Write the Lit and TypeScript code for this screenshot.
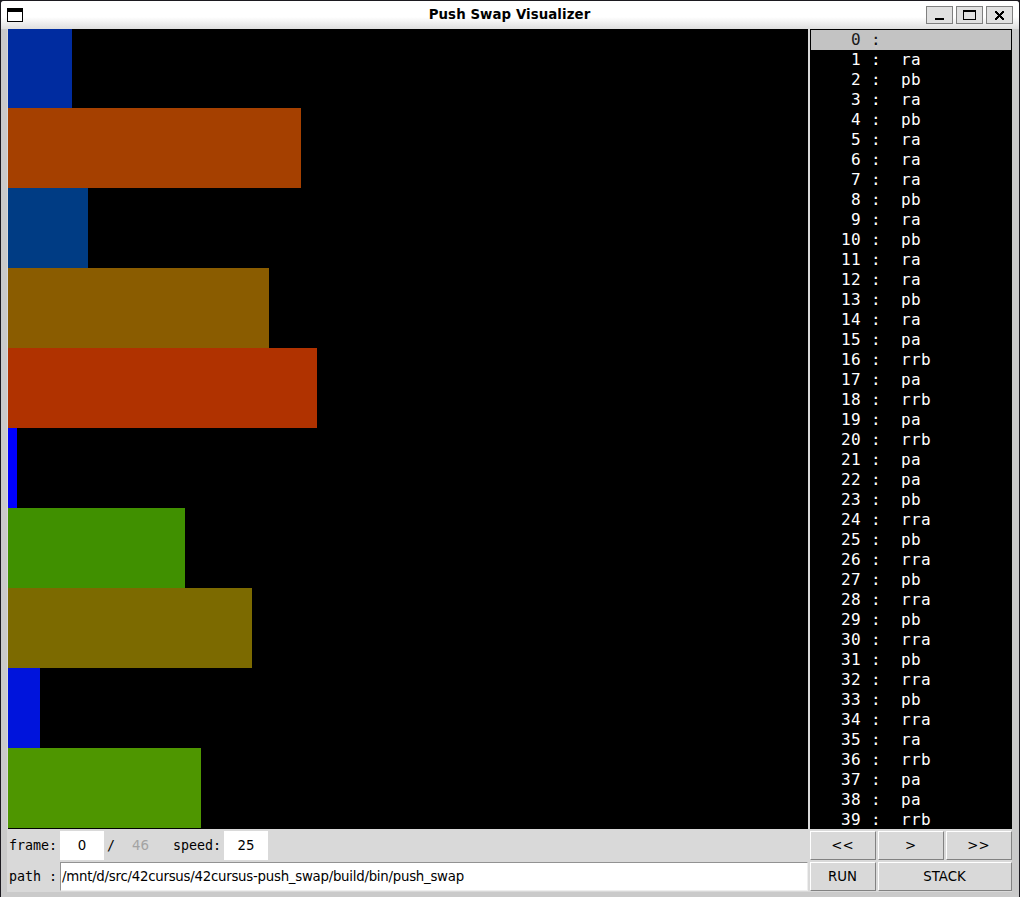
import { LitElement, html, css, svg } from "lit";
import { customElement } from "lit/decorators.js";

const BARS: [number, string][] = [
  [64, "#002ca0"],
  [293, "#a54000"],
  [80, "#003c84"],
  [261, "#8a5c00"],
  [309, "#b03200"],
  [9, "#0000ff"],
  [177, "#409000"],
  [244, "#7c6a00"],
  [32, "#0014dc"],
  [193, "#4e9600"],
];

const OPS = (
  " ra pb ra pb ra ra ra pb ra pb ra ra pb ra pa rrb pa rrb pa rrb pa pa pb " +
  "rra pb rra pb rra pb rra pb rra pb rra ra rrb pa pa rrb"
).split(" ");

@customElement("app-root")
export class AppRoot extends LitElement {
  static styles = css`
    :host {
      display: block;
      width: 1020px;
      height: 897px;
      overflow: hidden;
      background: #1c1a20;
      font-family: "DejaVu Sans", sans-serif;
      color: #000;
    }
    * { box-sizing: border-box; }
    .window {
      height: 897px;
      margin: 0 1px;
      padding-top: 1px;
    }
    .frame {
      height: 896px;
      background: #cacaca;
      border-radius: 3px 3px 0 0;
      overflow: hidden;
    }
    .title {
      height: 28px;
      display: grid;
      grid-template-columns: 93px 1fr 93px;
      align-items: center;
      padding: 0 0 0 6px;
      background: linear-gradient(#fff 0 16px, #dedede 28px);
    }
    .menu { display: block; }
    .name {
      text-align: center;
      font-weight: bold;
      font-size: 13.33px;
      letter-spacing: 0.08px;
      line-height: 20px;
      height: 21px;
      padding-right: 7px;
      white-space: nowrap;
    }
    .wbtns { display: flex; gap: 3px; }
    .wbtns svg { display: block; }
    .body {
      margin: 0 7px 0 6px;
      height: 863px;
      padding-left: 1px;
      background: #d9d9d9;
    }
    .main { display: flex; gap: 2px; height: 800px; }
    .canvas {
      width: 800px;
      background: #000;
      overflow: hidden;
    }
    .bars { margin-top: -1px; }
    .bar { height: 80px; }
    .list {
      width: 202px;
      background: #000;
      color: #fff;
      padding: 1px;
      overflow: hidden;
      font: 16px/20px "DejaVu Sans Mono", monospace;
      letter-spacing: 0.37px;
      white-space: pre;
    }
    .row { height: 20px; padding-left: 30px; }
    .row.sel { background: #c3c3c3; color: #1a1a1a; }
    .controls {
      display: grid;
      grid-template-columns: 800px 66px 66px 66px;
      grid-template-rows: 29px 29px;
      gap: 2px;
      padding-top: 2px;
    }
    .fields {
      display: flex;
      align-items: center;
      font-size: 13.33px;
    }
    .mono {
      font: 13.33px/29px "DejaVu Sans Mono", monospace;
      white-space: pre;
      flex: none;
      padding-left: 1px;
    }
    .lbl { width: 52px; }
    .slash { width: 14px; padding-left: 3px; }
    .speed { width: 52px; margin-left: 10px; }
    .num {
      width: 44px;
      height: 29px;
      line-height: 29px;
      text-align: center;
      background: #fff;
    }
    .num.off { background: none; color: #a3a3a3; padding-left: 1px; }
    .path {
      flex: 1;
      height: 29px;
      line-height: 27px;
      padding-left: 1px;
      letter-spacing: -0.255px;
      background: #fff;
      border: 1px solid;
      border-color: #929292 #eee #eee #929292;
      white-space: nowrap;
    }
    .btn {
      font: 13.33px/27px "DejaVu Sans", sans-serif;
      text-align: center;
      padding-right: 1px;
      border: 1px solid;
      border-color: #fff #828282 #828282 #fff;
      background: #d9d9d9;
    }
    .wide { grid-column: span 2; }
  `;

  private winButton(glyph: unknown) {
    return html`<svg width="27" height="18" viewBox="0 0 27 18" shape-rendering="crispEdges">
      <rect x=".5" y=".5" width="26" height="17" fill="#e1e1e1" stroke="#808080" />
      ${glyph}
    </svg>`;
  }

  render() {
    return html`<div class="window"><div class="frame">
      <div class="title">
        <svg class="menu" width="16" height="14" viewBox="0 0 16 14" shape-rendering="crispEdges">
          <rect x=".5" y=".5" width="15" height="13" fill="#fff" stroke="#000" />
          <path d="M0 0h16v4H0z" />
        </svg>
        <div class="name">Push Swap Visualizer</div>
        <div class="wbtns">
          ${this.winButton(svg`<path d="M9 12h9v2H9z"/>`)}
          ${this.winButton(svg`<path fill-rule="evenodd" d="M7 4h13v10H7zM8 6v7h11V6z"/>`)}
          ${this.winButton(svg`<path d="M9 5h2v1h1v1h1v1h1v-1h1v-1h1v-1h2v2h-1v1h-1v1h-1v1h1v1h1v1h1v2h-2v-1h-1v-1h-1v-1h-1v1h-1v1h-1v1h-2v-2h1v-1h1v-1h1v-1h-1v-1h-1v-1h-1z"/>`)}
        </div>
      </div>
      <div class="body">
        <div class="main">
          <div class="canvas"><div class="bars">
            ${BARS.map(([w, c]) => html`<div class="bar" style="width:${w}px;background:${c}"></div>`)}
          </div></div>
          <div class="list">${OPS.map(
            (op, i) => html`<div class="row ${i ? "" : "sel"}">${String(i).padStart(2)} :  ${op}</div>`
          )}</div>
        </div>
        <div class="controls">
          <div class="fields">
            <span class="mono lbl">frame:</span><div class="num">0</div>
            <span class="mono slash">/</span><div class="num off">46</div>
            <span class="mono speed">speed:</span><div class="num">25</div>
          </div>
          <div class="btn">&lt;&lt;</div>
          <div class="btn">&gt;</div>
          <div class="btn">&gt;&gt;</div>
          <div class="fields">
            <span class="mono lbl">path :</span>
            <div class="path">/mnt/d/src/42cursus/42cursus-push_swap/build/bin/push_swap</div>
          </div>
          <div class="btn">RUN</div>
          <div class="btn wide">STACK</div>
        </div>
      </div>
    </div></div>`;
  }
}
